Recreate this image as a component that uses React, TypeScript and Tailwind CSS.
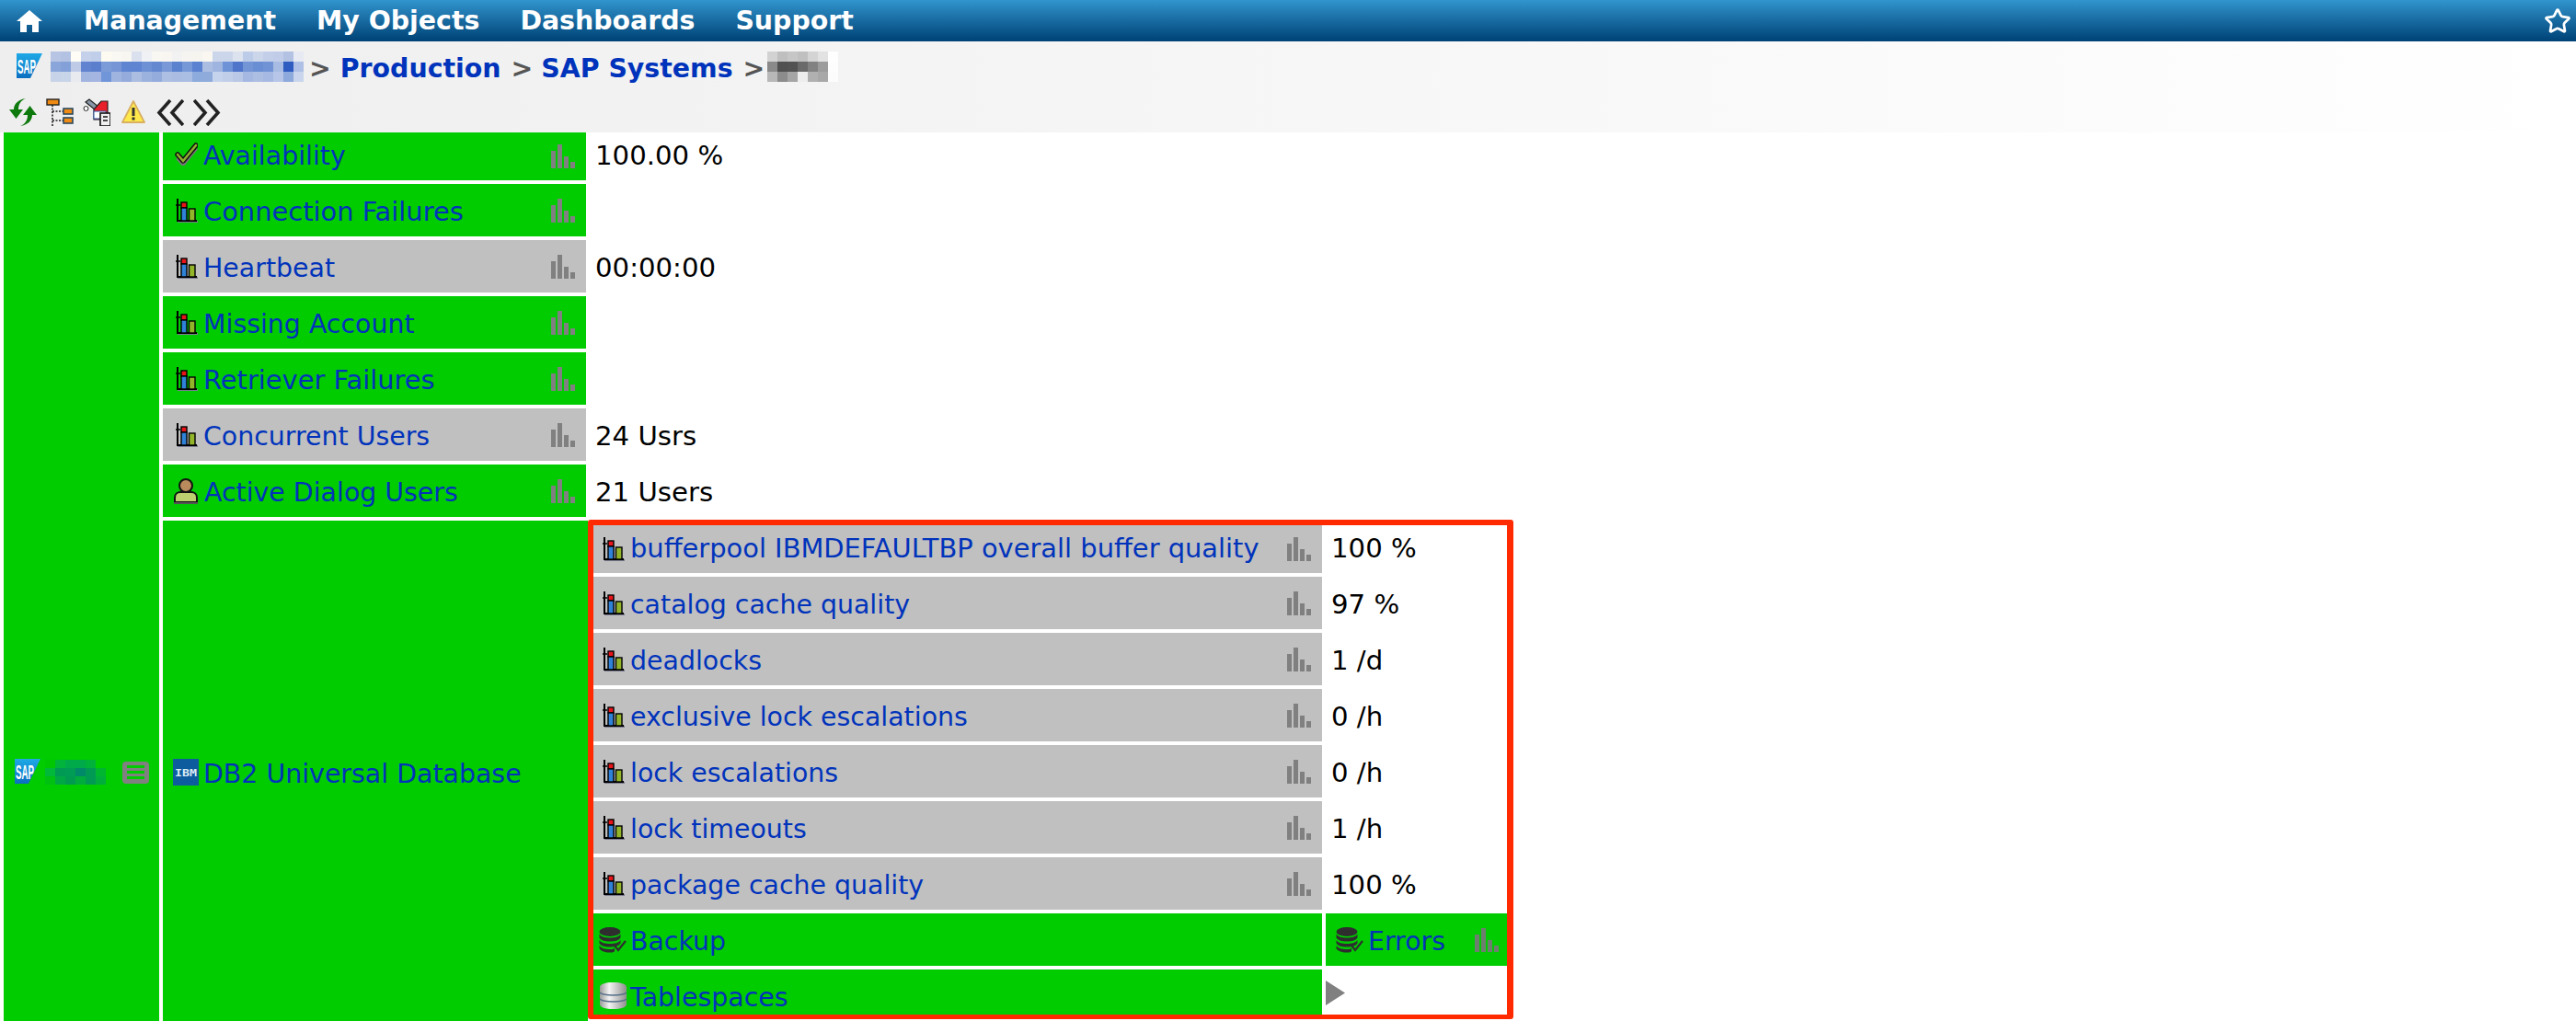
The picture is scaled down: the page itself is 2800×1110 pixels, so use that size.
import React from "react";
import { Star } from "lucide-react";

const BLUE = [
  ["b7c4e3","b3c2e2","fffdf5","c5d0ea","c0ceea","fdfaf2","faf8f2","f8f6f0","dbe0ef","f0f1f4","f9f7f2","f9f6f1","f2f2f2","f6f4f0","f5f4ef","f9f7f0","ccd6eb","ccd6eb","dde2ef","bccce8","cbd6ea","c3cfe9","c1cde8","b3c2e3","e7eaf3"],
  ["8aa5da","83a0d8","bfcbe6","6283d0","5c7fcd","7a9ad8","7595d6","5f85d2","5e84d2","6e90d4","6489d1","7898d8","5a82cf","7798d7","5b82d1","acbde2","9fb5e0","6e93d6","4e75ca","7395d5","6a8ed4","7093d5","a8bbe2","2e5cc0","aec0e6"],
  ["c7d3e8","c8d4e8","e8eaf0","a2b4e0","a3b5e0","7095d8","a0b4e0","94abdc","abbde0","9cb2de","94acdc","adbfe2","aabce2","aabde2","8dabdc","8eabdc","c6d3ec","c1ceea","b9c8e6","a4b8e2","adbee3","a6b9e2","b7c6e8","8ea9dc","c8d5ec"],
];
const GREY = [
  ["d2d2d2","bfbfbf","c6c6c6","c0c0c0","d4d4d4","e2e2e2","fefefe"],
  ["8a8a8a","505050","525252","6a6a6a","828282","9c9c9c","fdfdfd"],
  ["b8b8b8","8c8c8c","a5a5a5","ededed","b0b0b0","a8a8a8","fcfcfc"],
];
const GREEN = [
  ["00c800","00b43c","00a94a","00a94a","00b23a","00cc00"],
  ["00b83a","009a55","009c55","008a6a","009a55","00b530"],
  ["00c010","00a845","009a50","00ad3c","009a55","00ae3c"],
];

function Mosaic({ rows, cell = 11, h }: { rows: string[][]; cell?: number; h?: number }) {
  const ch = h ?? cell;
  return (
    <svg width={rows[0].length * cell} height={rows.length * ch} className="shrink-0" shapeRendering="crispEdges">
      {rows.map((r, y) =>
        r.map((c, x) => <rect key={x + "-" + y} x={x * cell} y={y * ch} width={cell} height={ch} fill={"#" + c} />)
      )}
    </svg>
  );
}

function SapIcon({ id }: { id: string }) {
  return (
    <svg viewBox="0 0 28 29" width="28" height="29" className="shrink-0">
      <defs>
        <linearGradient id={id} x1="0" y1="0" x2="0" y2="1">
          <stop offset="0" stopColor="#1fa9e6" />
          <stop offset="1" stopColor="#0a6fc0" />
        </linearGradient>
      </defs>
      <polygon points="0,0 28,0 15,27 0,27" fill={"url(#" + id + ")"} />
      <text x="1" y="13" fill="#fff" fontFamily="Liberation Sans, sans-serif" fontWeight="700" fontSize="13" textLength="20" lengthAdjust="spacingAndGlyphs" transform="scale(1 1.7)">SAP</text>
    </svg>
  );
}

function IbmIcon() {
  return (
    <svg viewBox="0 0 28 29" width="28" height="29" className="mt-[3px] shrink-0">
      <rect width="28" height="29" fill="#0d5c9e" />
      <text x="2" y="18.5" fill="#dcecf5" fontFamily="DejaVu Sans Mono, monospace" fontWeight="700" fontSize="11" textLength="24" lengthAdjust="spacingAndGlyphs">IBM</text>
    </svg>
  );
}

function ChartIcon({ className = "" }: { className?: string }) {
  return (
    <svg viewBox="0 0 24 26" width="24" height="26" className={"shrink-0 " + className}>
      <rect x="2" y="24" width="22" height="2" fill="#7a7a90" />
      <path d="M2 0v24h21" fill="none" stroke="#000" strokeWidth="2" />
      <path d="M0 7h5" stroke="#000" strokeWidth="1.5" />
      <rect x="6" y="4" width="6" height="6" fill="#e8141a" stroke="#000" strokeWidth="1.4" />
      <rect x="6" y="10" width="6" height="14" fill="#2f82d8" stroke="#000" strokeWidth="1.4" />
      <rect x="14.5" y="11" width="6.5" height="13" fill="#93b52a" stroke="#000" strokeWidth="1.4" />
    </svg>
  );
}

function CheckIcon() {
  return (
    <svg viewBox="0 0 25 26" width="25" height="26" className="ml-[2px] mt-[-6px] shrink-0">
      <path d="M3 15l6 7L23 5" fill="none" stroke="#777" strokeWidth="5" transform="translate(0 2)" />
      <path d="M3 14l6 7L23 4" fill="none" stroke="#111" strokeWidth="5.5" strokeLinejoin="round" strokeLinecap="round" />
      <path d="M3 14l6 7L23 4" fill="none" stroke="#8eb02e" strokeWidth="2.6" strokeLinecap="round" />
    </svg>
  );
}

function PersonIcon() {
  return (
    <svg viewBox="0 0 28 28" width="28" height="28" className="shrink-0">
      <circle cx="14" cy="8" r="7" fill="#b88a5c" stroke="#111" strokeWidth="2" />
      <path d="M2 26v-5c0-4 3-6 6-6h12c3 0 6 2 6 6v5z" fill="#bcd070" stroke="#111" strokeWidth="2" />
      <rect x="1" y="26" width="26" height="2" fill="#555" />
    </svg>
  );
}

function BarsIcon({ dark = false, className = "" }: { dark?: boolean; className?: string }) {
  const f = dark ? "#6f7f6f" : "#808080";
  return (
    <svg viewBox="0 0 26 26" width="26" height="26" className={"shrink-0 " + className}>
      <rect x="0" y="7" width="5" height="19" fill={f} />
      <rect x="7" y="0" width="5" height="26" fill={f} />
      <rect x="14" y="13" width="5" height="13" fill={f} />
      <rect x="21" y="19" width="5" height="7" fill={f} />
    </svg>
  );
}

function DbCheckIcon() {
  return (
    <svg viewBox="0 0 30 28" width="30" height="28" className="shrink-0">
      <ellipse cx="12" cy="5" rx="11.5" ry="5" fill="#2e2e2e" />
      <path d="M.5 7.5c2 3 6 4 11.5 4s9.5-1 11.5-4v4c-2 3-6 4-11.5 4S2.5 14.5.5 11.5z" fill="#2e2e2e" />
      <path d="M.5 14c2 3 6 4 11.5 4s9.5-1 11.5-4v3.5c-2 3-6 4-11.5 4S2.5 20.5.5 17.5z" fill="#2e2e2e" />
      <path d="M.5 20c2 3 6 4 11.5 4 2 0 3 0 5-1v3.5c-2 1-3 1-5 1-6 0-10.5-2-11.5-4.5z" fill="#2e2e2e" />
      <path d="M17 20l4 5 8-10" fill="none" stroke="#2e2e2e" strokeWidth="2.2" />
    </svg>
  );
}

function CylinderIcon() {
  return (
    <svg viewBox="0 0 29 29" width="29" height="29" className="shrink-0">
      <defs>
        <linearGradient id="cyl" x1="0" y1="0" x2="1" y2="0">
          <stop offset="0" stopColor="#9a9a9a" />
          <stop offset="0.35" stopColor="#f4f4f4" />
          <stop offset="1" stopColor="#8f8f8f" />
        </linearGradient>
      </defs>
      <path d="M0 5c0-3 6-5 14.5-5S29 2 29 5v19c0 3-6 5-14.5 5S0 27 0 24z" fill="url(#cyl)" />
      <path d="M0 11c3 3 9 3 14.5 3S26 14 29 11M0 18c3 3 9 3 14.5 3S26 21 29 18" fill="none" stroke="#55708a" strokeWidth="1.6" />
    </svg>
  );
}

function TreeIcon() {
  return (
    <svg viewBox="0 0 30 30" width="30" height="30" className="shrink-0">
      <path d="M7 7v23M7 14h12M7 24h12" stroke="#222" strokeWidth="1.6" strokeDasharray="2 1.5" fill="none" />
      <rect x="1" y="1" width="13" height="6" fill="#ef8a12" stroke="#222" strokeWidth="1.4" />
      <rect x="19" y="11" width="10" height="6" fill="#ef8a12" stroke="#2a4a60" strokeWidth="1.6" />
      <rect x="19" y="21" width="10" height="6" fill="#ef8a12" stroke="#2a4a60" strokeWidth="1.6" />
    </svg>
  );
}

function ToolIcon() {
  return (
    <svg viewBox="0 0 30 30" width="30" height="30" className="shrink-0">
      <path d="M3 4l4-3 10 8-3 4z" fill="#8a97a8" stroke="#222" strokeWidth="1.2" />
      <circle cx="3.5" cy="11" r="2.5" fill="#fff" stroke="#222" />
      <path d="M12 12l8-9h7v20H12z" fill="#e8202a" stroke="#222" strokeWidth="1.2" />
      <rect x="12" y="14" width="13" height="8" fill="#fff" stroke="#2a5aa8" />
      <rect x="19" y="16" width="11" height="14" fill="#f0f0f0" stroke="#111" strokeWidth="1.6" />
      <path d="M22 20h5M22 24h5" stroke="#111" strokeWidth="1.6" />
    </svg>
  );
}

function WarnIcon() {
  return (
    <svg viewBox="0 0 26 26" width="26" height="26" className="ml-[2px] shrink-0">
      <path d="M13 1L25 24H1z" fill="#ffe84a" stroke="#d8b060" strokeWidth="1.8" strokeLinejoin="round" />
      <rect x="11.5" y="8" width="3" height="9" fill="#333" />
      <rect x="11.5" y="18.5" width="3" height="3" fill="#333" />
    </svg>
  );
}

function DoubleChevron({ dir }: { dir: "l" | "r" }) {
  const d = dir === "l" ? "M15 1L3 14.5 15 28M29 1L17 14.5 29 28" : "M1 1l12 13.5L1 28M15 1l12 13.5L15 28";
  return (
    <svg viewBox="0 0 30 29" width="30" height="29" className="shrink-0">
      <path d={d} fill="none" stroke="#222" strokeWidth="3.6" />
    </svg>
  );
}

function RefreshIcon() {
  return (
    <svg viewBox="0 0 30 30" width="30" height="30" className="shrink-0">
      <path d="M18 0c-5 2-8 6-8 12h5L7.5 22 0 12h5C5 6 10 1 18 0z" fill="#0e7a0e" />
      <path d="M12 30c5-2 8-6 8-12h-5l7.5-10L30 18h-5c0 6-5 11-13 12z" fill="#0e7a0e" />
    </svg>
  );
}

function Cell({ grey, icon, label, bars, w, pl, tall, wide }: { grey?: boolean; icon: React.ReactNode; label: string; bars?: boolean; w: string; pl: string; tall?: boolean; wide?: boolean }) {
  return (
    <div className={"flex h-full shrink-0 items-center pr-[12px] " + w + " " + pl + " " + (grey ? "bg-[#c0c0c0]" : "bg-[#00cc00]")}>
      {icon}
      <span className={"ml-[6px] whitespace-nowrap text-[#0033bb] " + (tall ? "mt-[5px] " : "") + (wide ? "text-[28.9px]" : "")}>{label}</span>
      {bars && <BarsIcon className="ml-auto" />}
    </div>
  );
}

const outer: { label: string; value?: string; grey?: boolean; icon: React.ReactNode; tall: boolean; wide?: boolean }[] = [
  { label: "Availability", value: "100.00 %", icon: <CheckIcon />, tall: false },
  { label: "Connection Failures", icon: <ChartIcon className="ml-[3px]" />, tall: true, wide: true },
  { label: "Heartbeat", value: "00:00:00", grey: true, icon: <ChartIcon className="ml-[3px]" />, tall: true },
  { label: "Missing Account", icon: <ChartIcon className="ml-[3px]" />, tall: true },
  { label: "Retriever Failures", icon: <ChartIcon className="ml-[3px]" />, tall: true, wide: true },
  { label: "Concurrent Users", value: "24 Usrs", grey: true, icon: <ChartIcon className="ml-[3px]" />, tall: true },
  { label: "Active Dialog Users", value: "21 Users", icon: <PersonIcon />, tall: true },
];

const inner: { label: string; value: string; tall: boolean; wide?: boolean }[] = [
  { label: "bufferpool IBMDEFAULTBP overall buffer quality", value: "100 %", tall: false, wide: true },
  { label: "catalog cache quality", value: "97 %", tall: true },
  { label: "deadlocks", value: "1 /d", tall: true },
  { label: "exclusive lock escalations", value: "0 /h", tall: true },
  { label: "lock escalations", value: "0 /h", tall: true },
  { label: "lock timeouts", value: "1 /h", tall: true },
  { label: "package cache quality", value: "100 %", tall: true },
];

export default function App() {
  return (
    <div className="flex h-[1110px] w-full flex-col overflow-hidden bg-white text-[28.4px] text-black font-['DejaVu_Sans',sans-serif]">
      <header className="flex h-[45px] shrink-0 items-center bg-linear-to-b from-[#3195cd] to-[#004276] pl-[18px] pr-[5px] font-bold text-white">
        <svg viewBox="0 0 28 24" width="28" height="24" className="shrink-0" fill="#fff">
          <path d="M14 0L0 12h4v12h7v-8h6v8h7V12h4z" />
        </svg>
        <nav className="ml-[45px] mt-[2px] flex gap-[44px]">
          <span>Management</span>
          <span>My Objects</span>
          <span>Dashboards</span>
          <span>Support</span>
        </nav>
        <Star size={30} strokeWidth={2.2} className="ml-auto text-white" />
      </header>

      <div className="h-[99px] shrink-0 bg-linear-to-r from-[#eeeeee] to-[#ffffff]">
        <div className="flex h-[55px] items-center pl-[18px] font-bold">
          <SapIcon id="sap-a" />
          <div className="ml-[9px]"><Mosaic rows={BLUE} /></div>
          <span className="ml-[6px] mt-[5px] text-[#555555]">&gt;</span>
          <span className="ml-[10px] mt-[5px] text-[#0033bb]">Production</span>
          <span className="ml-[11px] mt-[5px] text-[#555555]">&gt;</span>
          <span className="ml-[9px] mt-[5px] whitespace-nowrap text-[#0033bb]">SAP Systems</span>
          <span className="ml-[11px] mt-[5px] text-[#555555]">&gt;</span>
          <div className="ml-[3px]"><Mosaic rows={GREY} /></div>
        </div>
        <div className="flex h-[44px] items-center gap-[10px] pl-[10px]">
          <RefreshIcon />
          <TreeIcon />
          <ToolIcon />
          <WarnIcon />
          <div className="ml-[2px] flex gap-[10px]">
            <DoubleChevron dir="l" />
            <DoubleChevron dir="r" />
          </div>
        </div>
      </div>

      <main className="flex min-h-0 flex-1 gap-[4px] pl-[4px]">
        <div className="flex w-[169px] shrink-0 items-end bg-[#00cc00] pb-[256px] pl-[12px] pr-[11px]">
          <div className="flex w-full items-center">
            <SapIcon id="sap-b" />
            <div className="ml-[5px]"><Mosaic rows={GREEN} cell={11} h={9} /></div>
            <div className="ml-auto flex h-[24px] w-[29px] flex-col justify-center gap-[3px] rounded-[4px] bg-[#808080] px-[5px]">
              <div className="h-[3px] bg-[#00cc00]" />
              <div className="h-[3px] bg-[#00cc00]" />
              <div className="h-[3px] bg-[#00cc00]" />
            </div>
          </div>
        </div>

        <div className="flex min-w-0 flex-1 flex-col gap-[4px]">
          {outer.map((r) => (
            <div key={r.label} className={"flex shrink-0 items-center " + (r.tall ? "h-[57px]" : "h-[52px]")}>
              <Cell grey={r.grey} icon={r.icon} label={r.label} bars tall={r.tall} wide={r.wide} w="w-[460px]" pl="pl-[11px]" />
              {r.value && <span className={"ml-[10px] text-[29.2px] " + (r.tall ? "mt-[5px]" : "")}>{r.value}</span>}
            </div>
          ))}

          <div className="flex min-h-0 flex-1">
            <div className="flex w-[462px] shrink-0 items-center bg-[#00cc00] pl-[11px]">
              <IbmIcon />
              <span className="ml-[5px] mt-[9px] whitespace-nowrap text-[#0033bb]">DB2 Universal Database</span>
            </div>
            <div className="mt-[-1px] flex h-[543px] w-[1006px] shrink-0 flex-col gap-[4px] overflow-hidden rounded-[3px] border-t-[6px] border-r-[7px] border-b-[5px] border-l-[6px] border-[#ff2a00] bg-white">
              {inner.map((r) => (
                <div key={r.label} className={"flex shrink-0 items-center " + (r.tall ? "h-[57px]" : "h-[52px]")}>
                  <Cell grey icon={<ChartIcon className="ml-[10px]" />} label={r.label} bars tall={r.tall} wide={r.wide} w="w-[792px]" pl="" />
                  <span className={"ml-[10px] text-[29.2px] " + (r.tall ? "mt-[5px]" : "")}>{r.value}</span>
                </div>
              ))}
              <div className="flex h-[57px] shrink-0 items-center gap-[4px]">
                <div className="flex h-full w-[792px] shrink-0 items-center bg-[#00cc00] pl-[6px]">
                  <DbCheckIcon />
                  <span className="ml-[4px] mt-[5px] text-[#0033bb]">Backup</span>
                </div>
                <div className="flex h-full flex-1 items-center bg-[#00cc00] pl-[11px] pr-[9px]">
                  <DbCheckIcon />
                  <span className="ml-[5px] mt-[5px] text-[#0033bb]">Errors</span>
                  <BarsIcon dark className="ml-auto" />
                </div>
              </div>
              <div className="flex h-[57px] shrink-0 items-center gap-[4px]">
                <div className="flex h-full w-[792px] shrink-0 items-center bg-[#00cc00] pl-[7px]">
                  <CylinderIcon />
                  <span className="ml-[4px] mt-[5px] text-[#0033bb]">Tablespaces</span>
                </div>
                <svg viewBox="0 0 21 27" width="21" height="27" className="mb-[6px] shrink-0" fill="#808080">
                  <path d="M0 0l21 13.5L0 27z" />
                </svg>
              </div>
            </div>
          </div>
        </div>
      </main>
    </div>
  );
}
